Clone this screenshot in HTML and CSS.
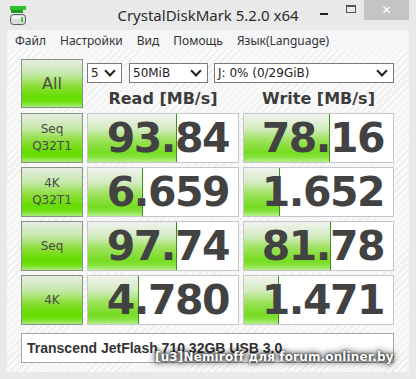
FILE: index.html
```html
<!DOCTYPE html>
<html>
<head>
	<meta charset="utf-8">
	<title>CrystalDiskMark 5.2.0 x64</title>
	<link rel="stylesheet" href="styles.css">
</head>
<body>
<div class="window">
	<div class="titlebar">
		<svg class="app-icon" width="16" height="20" viewBox="0 0 16 20">
			<rect x="0" y="0" width="16" height="4" fill="#2fbf2f"/>
			<rect x="1" y="4" width="12" height="3" fill="#1f9a1f"/>
			<rect x="0.5" y="8.5" width="15" height="10" rx="3" fill="#dcdcdc" stroke="#5a5a5a"/>
			<rect x="2" y="10" width="12" height="3" rx="1" fill="#f4f4f4"/>
			<rect x="11" y="11" width="2" height="5" fill="#39c83a"/>
		</svg>
		<div class="title">CrystalDiskMark 5.2.0 x64</div>
		<div class="controls">
			<span class="ctl min"><i></i></span>
			<span class="ctl max"><i></i></span>
			<span class="ctl close">&#x2715;</span>
		</div>
	</div>
	<div class="frame">
		<div class="menu">
			<span>Файл</span>
			<span>Настройки</span>
			<span>Вид</span>
			<span>Помощь</span>
			<span>Язык(Language)</span>
		</div>
		<div class="client">
			<div class="board">
				<div class="label all">All</div>
				<div class="head">
					<div class="selects">
						<div class="select count">5</div>
						<div class="select size">50MiB</div>
						<div class="select drive">J: 0% (0/29GiB)</div>
					</div>
					<div class="titles">
						<div>Read [MB/s]</div>
						<div>Write [MB/s]</div>
					</div>
				</div>

				<div class="label">Seq<br>Q32T1</div>
				<div class="cell"><div class="bar" style="width: 89px"></div><span>93.84</span></div>
				<div class="cell"><div class="bar" style="width: 86px"></div><span>78.16</span></div>

				<div class="label">4K<br>Q32T1</div>
				<div class="cell"><div class="bar" style="width: 55px"></div><span>6.659</span></div>
				<div class="cell"><div class="bar" style="width: 36px"></div><span>1.652</span></div>

				<div class="label">Seq</div>
				<div class="cell"><div class="bar" style="width: 89px"></div><span>97.74</span></div>
				<div class="cell"><div class="bar" style="width: 87px"></div><span>81.78</span></div>

				<div class="label">4K</div>
				<div class="cell"><div class="bar" style="width: 51px"></div><span>4.780</span></div>
				<div class="cell"><div class="bar" style="width: 35px"></div><span>1.471</span></div>
			</div>
			<div class="device">Transcend JetFlash 710 32GB USB 3.0</div>
			<div class="watermark">[u3]Nemiroff для forum.onliner.by</div>
		</div>
	</div>
</div>
</body>
</html>
```

FILE: styles.css
```css
body {
	margin: 0;
	background: #e8e8e8;
	font-family: "DejaVu Sans", Verdana, sans-serif;
	color: #404040;
}
.window {
	width: 416px;
	height: 379px;
	background: #e9e9e9;
	overflow: hidden;
}

/* title bar */
.titlebar {
	height: 30px;
	display: grid;
	grid-template-columns: 1fr auto 1fr;
	align-items: start;
}
.app-icon { margin: 6px 0 0 10px; }
.title {
	font-family: "Noto Sans", sans-serif;
	font-size: 15px;
	color: #2b2b2b;
	line-height: 30px;
}
.controls {
	justify-self: end;
	display: flex;
	margin-right: 7px;
}
.ctl {
	height: 20px;
	display: flex;
	align-items: center;
	justify-content: center;
}
.min { width: 26px; }
.min i { width: 8px; height: 2px; background: #1e1e1e; margin-top: 7px; }
.max { width: 27px; }
.max i { width: 8px; height: 5px; border: 1px solid #555; border-top-width: 2px; margin-top: -3px; }
.close {
	width: 45px;
	background: #c4c4c4;
	color: #fff;
	font-size: 12px;
	font-weight: bold;
}

/* frame and menu */
.frame { padding: 0 7px 7px 7px; }
.menu {
	height: 20px;
	background: #f5f6f7;
	display: flex;
	gap: 14px;
	padding-left: 8px;
	align-items: center;
	font-family: "Noto Sans", sans-serif;
	font-size: 12px;
	color: #333;
}
.client {
	position: relative;
	height: 322px;
	box-sizing: border-box;
	padding: 9px 0 0 14px;
	background: #f8f8f8 repeating-linear-gradient(135deg, #f9f9f9 0, #f9f9f9 4px, #ececec 4px, #ececec 5px);
}

/* benchmark board */
.board {
	display: grid;
	grid-template-columns: 62px 152px 151px;
	grid-template-rows: 50px 50px 50px 50px 50px;
	column-gap: 4px;
	row-gap: 4px;
}
.label {
	box-sizing: border-box;
	border: 1px solid #859585;
	background: linear-gradient(to bottom, #e8ece4 0%, #c4e8a8 30%, #8ede3c 55%, #66dc00 78%, #6cde0a 88%, #a8ec78 100%);
	display: flex;
	align-items: center;
	justify-content: center;
	text-align: center;
	font-size: 12px;
	line-height: 17px;
	color: #4a4a4a;
}
.label.all { height: 49px; font-size: 16px; }
.head {
	grid-column: 2 / 4;
	display: flex;
	flex-direction: column;
}
.selects {
	display: flex;
	margin-top: 4px;
	height: 20px;
}
.select {
	position: relative;
	box-sizing: border-box;
	height: 20px;
	border: 1px solid #7a7a7a;
	background: #fff;
	font-size: 12px;
	line-height: 18px;
	padding-left: 3px;
	color: #222;
}
.select::after {
	content: "";
	position: absolute;
	right: 7px;
	top: 3px;
	width: 6px;
	height: 6px;
	border-right: 2px solid #222;
	border-bottom: 2px solid #222;
	transform: rotate(45deg);
}
.count { width: 35px; margin-right: 7px; }
.size { width: 79px; margin-right: 6px; }
.drive { width: 180px; }
.titles {
	display: grid;
	grid-template-columns: 152px 151px;
	column-gap: 4px;
	margin-top: 6px;
	text-align: center;
	font-size: 16px;
	font-weight: bold;
	color: #3c3c3c;
}
.cell {
	position: relative;
	box-sizing: border-box;
	border: 1px solid #c6c6c6;
	background: #fff;
	display: flex;
	align-items: center;
	justify-content: flex-end;
	padding-right: 9px;
	font-size: 41px;
	font-weight: bold;
	letter-spacing: -1.5px;
	color: #424242;
}
.cell span { position: relative; }
.bar {
	position: absolute;
	left: 0;
	top: 0;
	bottom: 0;
	box-sizing: border-box;
	border-right: 1px solid #3d8f1c;
	background: linear-gradient(to bottom, #f0f3ee 0%, #d4ecc2 30%, #9ce25a 55%, #76dc22 80%, #86e23e 90%, #b6f08a 100%);
}
.device {
	box-sizing: border-box;
	width: 373px;
	height: 30px;
	margin-top: 8px;
	border: 1px solid #a6a6a6;
	background: #fff;
	font-family: "Liberation Sans", Arial, sans-serif;
	font-size: 14px;
	font-weight: bold;
	line-height: 28px;
	padding-left: 5px;
	color: #333;
}
.watermark {
	position: absolute;
	left: 148px;
	top: 300px;
	font-size: 12px;
	font-weight: bold;
	letter-spacing: 0.15px;
	color: #fff;
	text-shadow: 0 0 3px #000, 0 0 6px rgba(0,0,0,.8), 0 0 9px rgba(0,0,0,.6);
}
```
